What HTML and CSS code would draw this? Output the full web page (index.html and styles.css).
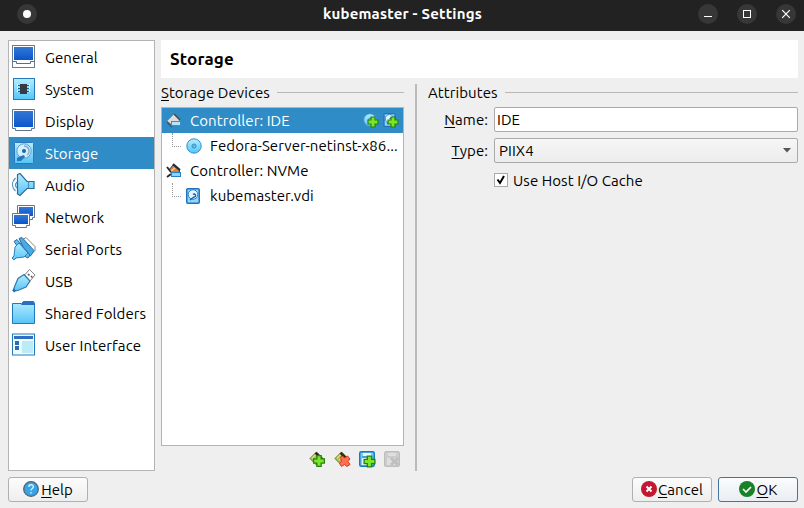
FILE: index.html
```
<!DOCTYPE html>
<html lang="en">
<head>
<meta charset="utf-8">
<title>kubemaster - Settings</title>
<link rel="stylesheet" href="styles.css">
</head>
<body>
<svg class="defs" width="0" height="0">
  <defs>
    <linearGradient id="screen" x1="0" y1="0" x2="0" y2="1"><stop offset="0" stop-color="#3378d4"/><stop offset="1" stop-color="#0b55cc"/></linearGradient>
    <linearGradient id="sky" x1="0" y1="0" x2="0" y2="1"><stop offset="0" stop-color="#b5edff"/><stop offset="1" stop-color="#55c4f8"/></linearGradient>
    <symbol id="disk" viewBox="0 0 20 22">
      <rect x=".5" y=".5" width="19" height="21" rx="1" fill="url(#sky)" stroke="#2879c0"/>
      <circle cx="10" cy="9" r="7.2" fill="#d5eefb" stroke="#5d9fc9"/>
      <path d="M10 4a5 5 0 0 1 3 9" fill="none" stroke="#79aed4" stroke-width="1.5"/>
      <circle cx="10" cy="9" r="2" fill="#1766a6"/>
      <path d="M3 19v-3l4-2 3-1 1 2-4 4z" fill="#2277bd"/>
    </symbol>
    <symbol id="smalldisk" viewBox="0 0 14 16">
      <rect x=".75" y=".75" width="12.5" height="14.5" rx="1" fill="#8fd8fb" stroke="#2471bd" stroke-width="1.5"/>
      <circle cx="7" cy="6.500" r="4.800" fill="#e3f6ff" stroke="#2b7dc4"/>
      <path d="M7 6.500a1.500 1.500 0 1 1 1 2.500L4 12" fill="none" stroke="#1b62a8" stroke-width="1.400"/>
    </symbol>
    <symbol id="plus" viewBox="0 0 12 12"><path d="M4 1h4v3h3v4H8v3H4V8H1V4h3z" fill="#7be526" stroke="#278113" stroke-width="1.2"/></symbol>
    <symbol id="disc" viewBox="0 0 16 16"><circle cx="8" cy="8" r="7.2" fill="url(#sky)" stroke="#2c91c9"/><circle cx="8" cy="8" r="2" fill="#9bddf5" stroke="#238bc5"/><circle cx="8" cy="8" r=".7" fill="#176b9d"/></symbol>
    <symbol id="card" viewBox="0 0 16 16"><path d="M1 8l7-7 7 7-7 7z" fill="#a8b94a" stroke="#69732b"/><path d="M8 1l7 7-2 2-7-7z" fill="#29271b"/><path d="M3 8l4-4M5 10l4-4" stroke="#e4df8c" stroke-width="1.3"/></symbol>
  </defs>
</svg>
<div class="window">
  <header class="titlebar">
    <span class="round menu-dot"></span>
    <h1>kubemaster - Settings</h1>
    <div class="controls">
      <span class="round"><svg width="20" height="20"><path d="M6 12.5h8" stroke="#fff"/></svg></span>
      <span class="round"><svg width="20" height="20"><rect x="6.5" y="6.5" width="7" height="7" fill="none" stroke="#fff"/></svg></span>
      <span class="round"><svg width="20" height="20"><path d="M6.2 6.2l7.6 7.6M13.8 6.2l-7.6 7.6" stroke="#fff" stroke-width="1.2"/></svg></span>
    </div>
  </header>
  <main class="content">
    <nav class="sidebar">
      <div class="item"><svg width="24" height="24"><rect x=".5" y=".5" width="22" height="22" fill="#fff" stroke="#687b94"/><rect x="2" y="2" width="19" height="13" fill="url(#screen)"/><path d="M1 16.5h3.5v2h14v-2H22" fill="none" stroke="#596e88"/></svg><span>General</span></div>
      <div class="item"><svg width="24" height="24"><rect x="1.5" y="1.5" width="21" height="21" fill="url(#sky)" stroke="#2479bb"/><path d="M5 8.5h13M5 11.5h13M5 14.5h13" stroke="#168"/><path d="M5.5 7v9M17.5 7v9" stroke="#fff" stroke-dasharray="2 1"/><rect x="8" y="7" width="7" height="10" fill="#363a45"/></svg><span>System</span></div>
      <div class="item"><svg width="24" height="24"><path d="M.5.5h22v19h-3v2h-16v-2h-3z" fill="#fff" stroke="#65758c"/><rect x="2" y="2" width="19" height="16" fill="url(#screen)"/></svg><span>Display</span></div>
      <div class="item selected"><svg width="24" height="24"><use href="#disk" x="2" y="1" width="20" height="22"/></svg><span>Storage</span></div>
      <div class="item"><svg width="24" height="24"><path d="M5.500 1.500L8 .5l7 8h7v7h-7l-7 7-2.500-1.500z" fill="url(#sky)" stroke="#286b9e" stroke-width="1.200"/><path d="M3.500 5c-4 4-4 9 0 13M5 9c-2 2-2 4 0 6M16.500 9v6" fill="none" stroke="#4a91bd" stroke-width="1.2"/></svg><span>Audio</span></div>
      <div class="item"><svg width="24" height="24"><path d="M5.5.5h17v12h-2v2h-13v-2h-2z" fill="#fff" stroke="#65758c"/><rect x="7" y="2" width="14" height="9" fill="url(#screen)"/><path d="M.5 8.5h17v12h-3v2h-11v-2h-3z" fill="#fff" stroke="#65758c"/><rect x="2" y="10" width="14" height="9" fill="url(#screen)"/></svg><span>Network</span></div>
      <div class="item"><svg width="24" height="24"><path d="M11 2.500l3-2 9 9v4l-3 3z" fill="#fff" stroke="#858585"/><path d="M7 1.500l3-1 12 13-3 5-3 1z" fill="#4ba9e3" stroke="#2670b0"/><path d="M2 4.500l3-2L18 18l-2 3-4-2z" fill="#5fbcf0" stroke="#2670b0"/><path d="M7 6l9 10-4 4-8 1-2 2-2-2 2-2 1-9z" fill="url(#sky)" stroke="#2d7ebb"/></svg><span>Serial Ports</span></div>
      <div class="item"><svg width="24" height="24"><path d="M12.500 6l5-5.500 5.500 5.500-5 6z" fill="#fff" stroke="#858585"/><path d="M16 5l1.500 1.500M19 7l1.500 1.500" stroke="#555" stroke-width="1.500"/><path d="M12 5.500l6 6.500-4 6-7 3-4 1-1.500-1.500 1.500-4 3-7z" fill="url(#sky)" stroke="#3279a9" stroke-width="1.2"/><path d="M1 20.500l2 2" stroke="#2470b0" stroke-width="2.500"/></svg><span>USB</span></div>
      <div class="item"><svg width="24" height="24"><path d="M.5 22.5v-20h9l2-2h10l1 2v20z" fill="url(#sky)" stroke="#2478bd"/><path d="M9 4l2-3.500h10l2 2V4z" fill="#286fc3"/></svg><span>Shared Folders</span></div>
      <div class="item"><svg width="24" height="24"><rect x=".5" y="1" width="22" height="21" fill="#f0fbff" stroke="#2478bd"/><path d="M2 4.500h19" stroke="#3070c2" stroke-width="3"/><path d="M3 8h4v4H3zM3 13h4v4H3z" fill="#2d69b8"/><rect x="10" y="8" width="11" height="12" fill="#b9ecf7"/></svg><span>User Interface</span></div>
    </nav>
    <section class="page">
      <h2>Storage</h2>
      <div class="panels">
        <section class="devices">
          <div class="legend"><span><u>S</u>torage Devices</span></div>
          <div class="tree">
            <div class="row current"><svg width="16" height="16"><path d="M1 8l7-7 6 6-7 6z" fill="#ddd" stroke="#8d8d8d"/><path d="M8 1l6 6" stroke="#51443c" stroke-width="1.500"/><path d="M1 9l5 5" stroke="#35546d" stroke-width="1.500"/><rect x="5.500" y="8.500" width="9" height="4" fill="#b6e5fa" stroke="#3193d0"/></svg><span>Controller: IDE</span>
              <div class="attach"><svg width="16" height="16"><use href="#disc" width="14" height="14"/><use href="#plus" x="4" y="3" width="12" height="12"/></svg><svg width="16" height="16"><use href="#smalldisk" width="13" height="14"/><use href="#plus" x="4" y="3" width="12" height="12"/></svg></div></div>
            <div class="row child"><i class="branch"></i><svg width="16" height="16"><use href="#disc" width="16" height="16"/></svg><span>Fedora-Server-netinst-x86...</span></div>
            <div class="row"><svg width="16" height="16"><path d="M3 7l4-5 7 6-6 5z" fill="#df7c3e" stroke="#3a3a3a"/><path d="M7 1l7 6M1 4l4 5M1 14l4-3" stroke="#252b33" stroke-width="2"/><path d="M5 8l4-3" stroke="#ffd19a" stroke-width="1.500"/><rect x="5.500" y="9.500" width="9" height="4" fill="#8bd3fa" stroke="#2681c0"/></svg><span>Controller: NVMe</span></div>
            <div class="row child"><i class="branch"></i><svg width="16" height="16"><use href="#smalldisk" width="14" height="16"/></svg><span>kubemaster.vdi</span></div>
          </div>
          <div class="tools">
            <svg width="18" height="18"><use href="#card" width="15" height="15"/><use href="#plus" x="3.500" y="3.500" width="13" height="13"/></svg>
            <svg width="18" height="18"><use href="#card" width="15" height="15"/><path d="M6.500 6l2-1 2 2 3-2 2.500 3-2 2.500 2 3-3 2-2.500-2-3 2-2-3 2-2z" fill="#ff704e" stroke="#ce3a26"/></svg>
            <svg width="18" height="18"><rect x=".75" y=".75" width="14.500" height="14.500" rx="1.5" fill="#72cdf4" stroke="#1979be" stroke-width="1.5"/><path d="M4 2h8v3H4zM3 7h10v7H3z" fill="#e8faff"/><path d="M3 6h10" stroke="#2475b5"/><use href="#plus" x="4" y="4" width="13" height="13"/></svg>
            <svg width="18" height="18"><rect x=".5" y=".5" width="15" height="15" rx="1.5" fill="#ccc" stroke="#bdbdbd"/><path d="M4 2h8v3H4zM3 7h10v7H3z" fill="#dedede"/><path d="M7 7l7 7M14 7l-7 7" stroke="#bfbfbf" stroke-width="3"/></svg>
          </div>
        </section>
        <div class="splitter"></div>
        <section class="attributes">
          <div class="legend"><span>Attributes</span></div>
          <div class="form">
            <label><u>N</u>ame:</label><div class="field">IDE</div>
            <label><u>T</u>ype:</label><div class="field select"><span>PIIX4</span><svg width="8" height="5"><path d="M0 0h8L4 4.5z" fill="#555"/></svg></div>
            <div class="check"><i><svg width="12" height="12"><path d="M2.5 5.5L5 9l4-7" fill="none" stroke="#000" stroke-width="2"/></svg></i><span>Use Host I/O Cache</span></div>
          </div>
        </section>
      </div>
    </section>
  </main>
  <footer>
    <div class="button help"><svg width="16" height="16"><circle cx="8" cy="8" r="7.3" fill="#36a4e6" stroke="#4d6475" stroke-width="1.300"/><path d="M5.8 6c0-3 4.6-3 4.6-.2C10.4 7.5 8 7.5 8 9.500M8 11v1.500" fill="none" stroke="#d8f2ff" stroke-width="1.4"/></svg><span><u>H</u>elp</span></div>
    <div class="button cancel"><svg width="16" height="16"><circle cx="8" cy="8" r="8" fill="#c31831"/><path d="M5.500 5.500l5 5M10.500 5.500l-5 5" stroke="#fff" stroke-width="2"/></svg><span><u>C</u>ancel</span></div>
    <div class="button ok"><svg width="16" height="16"><circle cx="8" cy="8" r="8" fill="#178226"/><path d="M4 8l3 3 5-5" fill="none" stroke="#fff" stroke-width="1.700"/></svg><span><u>O</u>K</span></div>
  </footer>
</div>
</body>
</html>
```
FILE: styles.css
```
* { box-sizing: border-box; }
body { margin: 0; background: #efefef; color: #000; font: 15px/20px Ubuntu, "Noto Sans", sans-serif; letter-spacing: .07px; }
svg { display: block; flex: none; }
u { text-decoration-thickness: 1px; text-underline-offset: 2px; text-decoration-skip-ink: none; }
span { white-space: nowrap; }
.defs { position: absolute; }
.window { width: 804px; height: 508px; display: flex; flex-direction: column; }
.titlebar { height: 31px; background: #222; display: grid; grid-template-columns: 100px 1fr 100px; align-items: center; padding: 0 8px 3px 17px; flex: none; }
.titlebar h1 { margin: 0; color: #fff; font-size: 15px; line-height: 20px; font-weight: 700; text-align: center; letter-spacing: .2px; padding-right: 8px; }
.round { width: 20px; height: 20px; border-radius: 50%; background: #373737; display: flex; }
.menu-dot { align-items: center; justify-content: center; }
.menu-dot::after { content: ""; width: 8px; height: 8px; border-radius: 50%; background: #fff; }
.controls { display: flex; gap: 19px; justify-content: flex-end; }
.content { display: flex; gap: 6px; padding: 9px 6px 0 8px; height: 440px; }
.sidebar { width: 147px; background: #fff; border: 1px solid #b4b4b4; }
.item { height: 32px; display: flex; align-items: center; gap: 9px; padding-left: 3px; }
.item span { padding-top: 2px; }
.item.selected { background: #308cc6; color: #fff; }
.page { width: 637px; }
h2 { margin: 0 0 6px; height: 38px; background: #fff; font-size: 17px; line-height: 38px; padding-left: 9px; letter-spacing: .15px; }
.panels { display: flex; height: 387px; }
.devices { width: 243px; }
.legend { height: 18px; line-height: 18px; display: flex; gap: 7px; }
.legend::after { content: ""; flex: 1; height: 1px; background: #b8b8b8; margin-top: 8px; }
.tree { margin-top: 5px; height: 339px; background: #fff; border: 1px solid #b4b4b4; }
.row { height: 25px; display: flex; align-items: center; gap: 8px; padding-left: 4px; }
.current { background: #308cc6; color: #fff; }
.attach { margin-left: auto; margin-right: 4px; display: flex; gap: 4px; }
.child { padding-left: 10px; }
.branch { width: 9px; height: 14px; border-left: 1px dotted #999; border-bottom: 1px dotted #999; align-self: flex-start; margin-right: -3px; }
.tools { display: flex; justify-content: flex-end; gap: 7px; padding: 5px 2px 0 0; }
.splitter { width: 2px; background: #bababa; margin: 0 11px; }
.attributes { width: 370px; }
.form { display: grid; grid-template-columns: 60px 304px; column-gap: 6px; row-gap: 6px; margin-top: 5px; }
.form label { text-align: right; line-height: 25px; }
.field { height: 25px; background: #fff; border: 1px solid #aaa; border-radius: 2px; padding: 0 2px; line-height: 24px; }
.select { background: linear-gradient(#f6f6f6, #ececec); display: flex; align-items: center; justify-content: space-between; padding: 0 6px 0 4px; }
.check { grid-column: 2; display: flex; align-items: center; gap: 5px; height: 20px; margin-top: 1px; }
.check i { width: 14px; height: 14px; border: 1px solid #aaa; background: #fff; }
.check span { padding-top: 1px; }
footer { padding: 6px 6px 0 8px; display: flex; gap: 6px; }
.button { width: 80px; height: 25px; border: 1px solid #b0b0b0; border-radius: 3px; background: linear-gradient(#fcfcfc, #eee); display: flex; align-items: center; justify-content: center; gap: 2px; }
.button svg { margin-top: -1px; }
.help { margin-right: auto; }
.cancel { gap: 1px; }
.ok { border-color: #45759d; background: linear-gradient(#fafcfd, #e9eef2); }
```
